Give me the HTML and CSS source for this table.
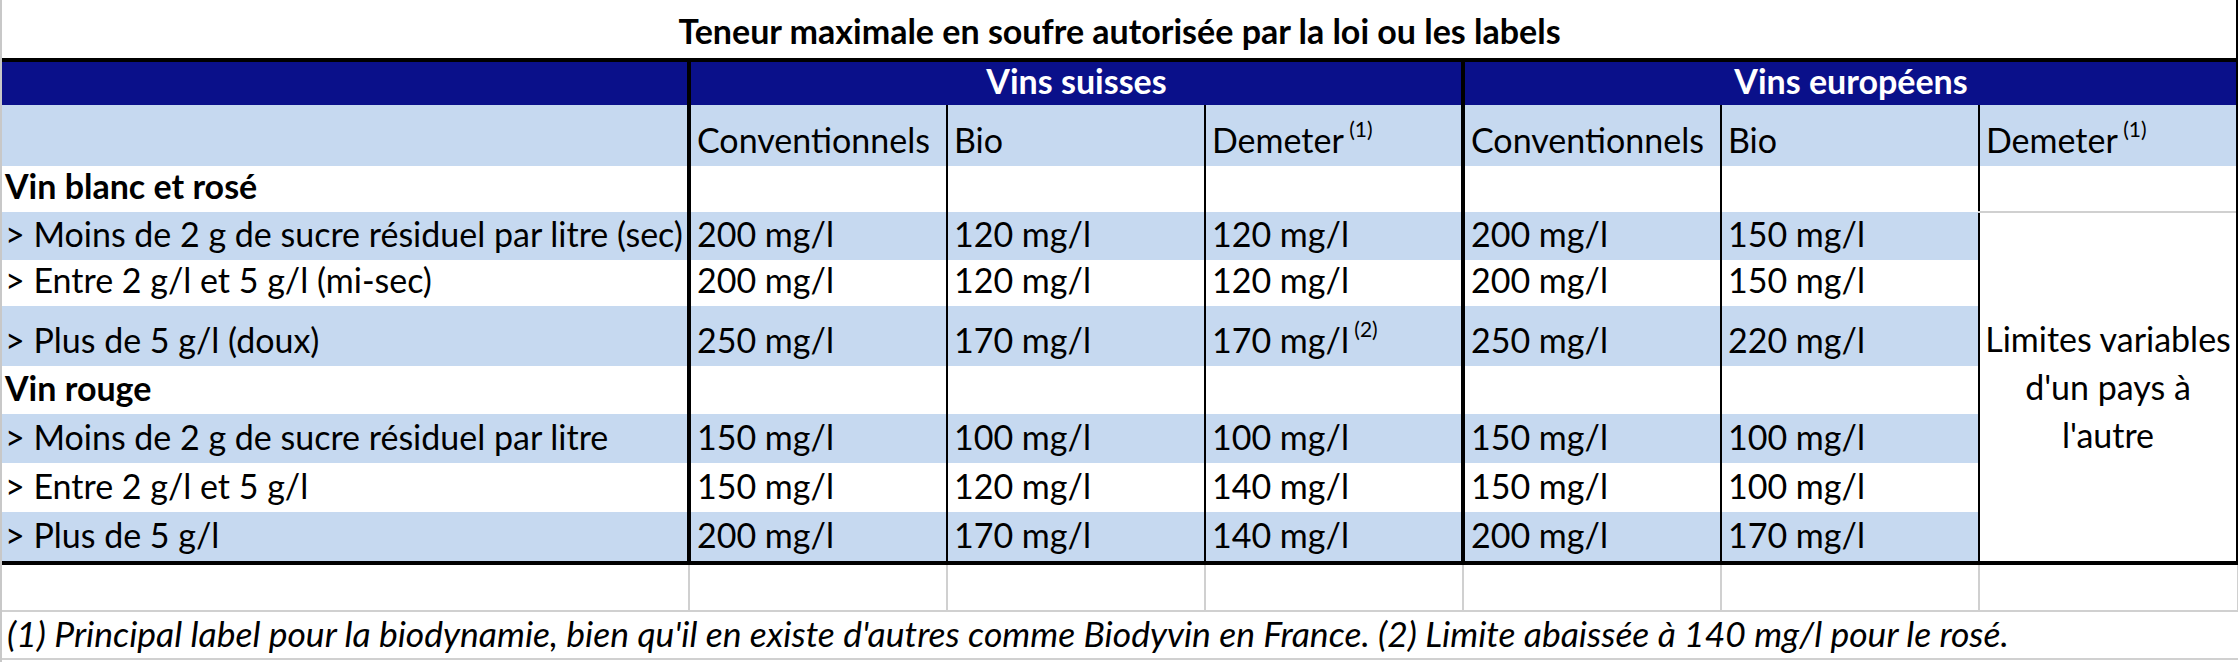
FILE: index.html
```html
<!DOCTYPE html>
<html lang="fr">
<head>
<meta charset="utf-8">
<title>Teneur maximale en soufre</title>
<link rel="stylesheet" href="styles.css">
</head>
<body>
<div class="sheet">
<table class="grid">
<colgroup>
<col class="c-label">
<col class="c-val"><col class="c-val"><col class="c-val">
<col class="c-val"><col class="c-val"><col class="c-last">
</colgroup>
<tbody>
<tr class="r-title">
<td colspan="7" class="title thick-r">Teneur maximale en soufre autorisée par la loi ou les labels</td>
</tr>
<tr class="r-group">
<td class="grp top"></td>
<td colspan="3" class="grp top thick-l">Vins suisses</td>
<td colspan="3" class="grp top thick-l thick-r">Vins européens</td>
</tr>
<tr class="r-head blue">
<td></td>
<td class="thick-l">Conventionnels</td>
<td class="thin-l">Bio</td>
<td class="thin-l">Demeter<sup> (1)</sup></td>
<td class="thick-l">Conventionnels</td>
<td class="thin-l">Bio</td>
<td class="thin-l thick-r">Demeter<sup> (1)</sup></td>
</tr>
<tr class="r-cat">
<td class="cat">Vin blanc et rosé</td>
<td class="thick-l"></td>
<td class="thin-l"></td>
<td class="thin-l"></td>
<td class="thick-l"></td>
<td class="thin-l"></td>
<td class="thin-l thick-r open"></td>
</tr>
<tr class="r-d1 blue">
<td>&gt; Moins de 2 g de sucre résiduel par litre (sec)</td>
<td class="thick-l">200 mg/l</td>
<td class="thin-l">120 mg/l</td>
<td class="thin-l">120 mg/l</td>
<td class="thick-l">200 mg/l</td>
<td class="thin-l">150 mg/l</td>
<td rowspan="7" class="merged thin-l thick-r">Limites variables<br>d'un pays à<br>l'autre</td>
</tr>
<tr class="r-d2">
<td>&gt; Entre 2 g/l et 5 g/l (mi-sec)</td>
<td class="thick-l">200 mg/l</td>
<td class="thin-l">120 mg/l</td>
<td class="thin-l">120 mg/l</td>
<td class="thick-l">200 mg/l</td>
<td class="thin-l">150 mg/l</td>
</tr>
<tr class="r-d3 blue">
<td>&gt; Plus de 5 g/l (doux)</td>
<td class="thick-l">250 mg/l</td>
<td class="thin-l">170 mg/l</td>
<td class="thin-l">170 mg/l<sup> (2)</sup></td>
<td class="thick-l">250 mg/l</td>
<td class="thin-l">220 mg/l</td>
</tr>
<tr class="r-cat2">
<td class="cat">Vin rouge</td>
<td class="thick-l"></td>
<td class="thin-l"></td>
<td class="thin-l"></td>
<td class="thick-l"></td>
<td class="thin-l"></td>
</tr>
<tr class="r-d5 blue">
<td>&gt; Moins de 2 g de sucre résiduel par litre</td>
<td class="thick-l">150 mg/l</td>
<td class="thin-l">100 mg/l</td>
<td class="thin-l">100 mg/l</td>
<td class="thick-l">150 mg/l</td>
<td class="thin-l">100 mg/l</td>
</tr>
<tr class="r-d6">
<td>&gt; Entre 2 g/l et 5 g/l</td>
<td class="thick-l">150 mg/l</td>
<td class="thin-l">120 mg/l</td>
<td class="thin-l">140 mg/l</td>
<td class="thick-l">150 mg/l</td>
<td class="thin-l">100 mg/l</td>
</tr>
<tr class="r-d7 blue last">
<td>&gt; Plus de 5 g/l</td>
<td class="thick-l">200 mg/l</td>
<td class="thin-l">170 mg/l</td>
<td class="thin-l">140 mg/l</td>
<td class="thick-l">200 mg/l</td>
<td class="thin-l">170 mg/l</td>
</tr>
<tr class="r-empty">
<td></td><td></td><td></td><td></td><td></td><td></td><td></td>
</tr>
<tr class="r-note">
<td colspan="7" class="note">(1) Principal label pour la biodynamie, bien qu'il en existe d'autres comme Biodyvin en France. (2) Limite abaissée à 140 mg/l pour le rosé.</td>
</tr>
</tbody>
</table>
</div>
</body>
</html>
```

FILE: styles.css
```css
html, body {
  margin: 0;
  padding: 0;
  background: #ffffff;
}

.sheet {
  border-left: 2px solid #c8c8c8;
  width: 2238px;
  height: 662px;
  overflow: hidden;
  box-sizing: border-box;
}

.grid {
  border-collapse: collapse;
  table-layout: fixed;
  width: 2236px;
  font-family: "Lato", "Open Sans", sans-serif;
  font-size: 34px;
  color: #000000;
}

.c-label { width: 687px; }
.c-val { width: 258px; }
.c-last { width: 259px; }

.grid td {
  padding: 0 5px 7px 6px;
  vertical-align: bottom;
  line-height: 38px;
  white-space: nowrap;
  overflow: visible;
}

.grid sup {
  font-size: 21px;
  line-height: 0;
  vertical-align: 16px;
}

.blue td { background: #c6d9f0; }

.thick-l { border-left: 4px solid #000000; }
.thin-l { border-left: 2px solid #000000; }
.thick-r { border-right: 4px solid #000000; }

/* title */
.r-title td { height: 60px; box-sizing: border-box; }
.title {
  text-align: center;
  font-weight: 700;
  font-size: 34px;
  padding-bottom: 8px !important;
}

/* group band */
.r-group td { height: 43px; box-sizing: border-box; }
.grp {
  background: #0a108a;
  color: #ffffff;
  font-weight: 700;
  text-align: center;
  padding-bottom: 5px !important;
}
.top { border-top: 4px solid #000000; }

.r-head td { height: 61px; box-sizing: border-box; }
.r-cat td { height: 46px; box-sizing: border-box; }
.r-cat2 td { height: 48px; box-sizing: border-box; }
.r-d1 td { height: 48px; box-sizing: border-box; }
.r-d2 td { height: 46px; box-sizing: border-box; }
.r-d3 td { height: 60px; box-sizing: border-box; }
.r-d5 td { height: 49px; box-sizing: border-box; }
.r-d6 td { height: 49px; box-sizing: border-box; }
.r-d7 td { height: 51px; box-sizing: border-box; }

.cat {
  font-weight: 700;
}

.r-cat td:first-child,
.r-cat2 td:first-child,
.r-d1 td:first-child,
.r-d2 td:first-child,
.r-d3 td:first-child,
.r-d5 td:first-child,
.r-d6 td:first-child,
.r-d7 td:first-child {
  padding-left: 3px;
}

.open { border-bottom: 2px solid #d0d0d0; }

.merged {
  background: #ffffff !important;
  text-align: center;
  vertical-align: middle !important;
  line-height: 48px !important;
  padding: 0 !important;
  border-bottom: 4px solid #000000;
}

.last td { border-bottom: 4px solid #000000; }

/* empty row with sheet gridlines */
.r-empty td {
  height: 48px;
  box-sizing: border-box;
  border-right: 2px solid #d0d0d0;
  border-bottom: 2px solid #d0d0d0;
}

.r-note td {
  height: 48px;
  box-sizing: border-box;
  border-bottom: 2px solid #d0d0d0;
}
.note {
  font-style: italic;
  font-size: 35.5px;
  padding-left: 5px !important;
  padding-bottom: 5px !important;
}
```
